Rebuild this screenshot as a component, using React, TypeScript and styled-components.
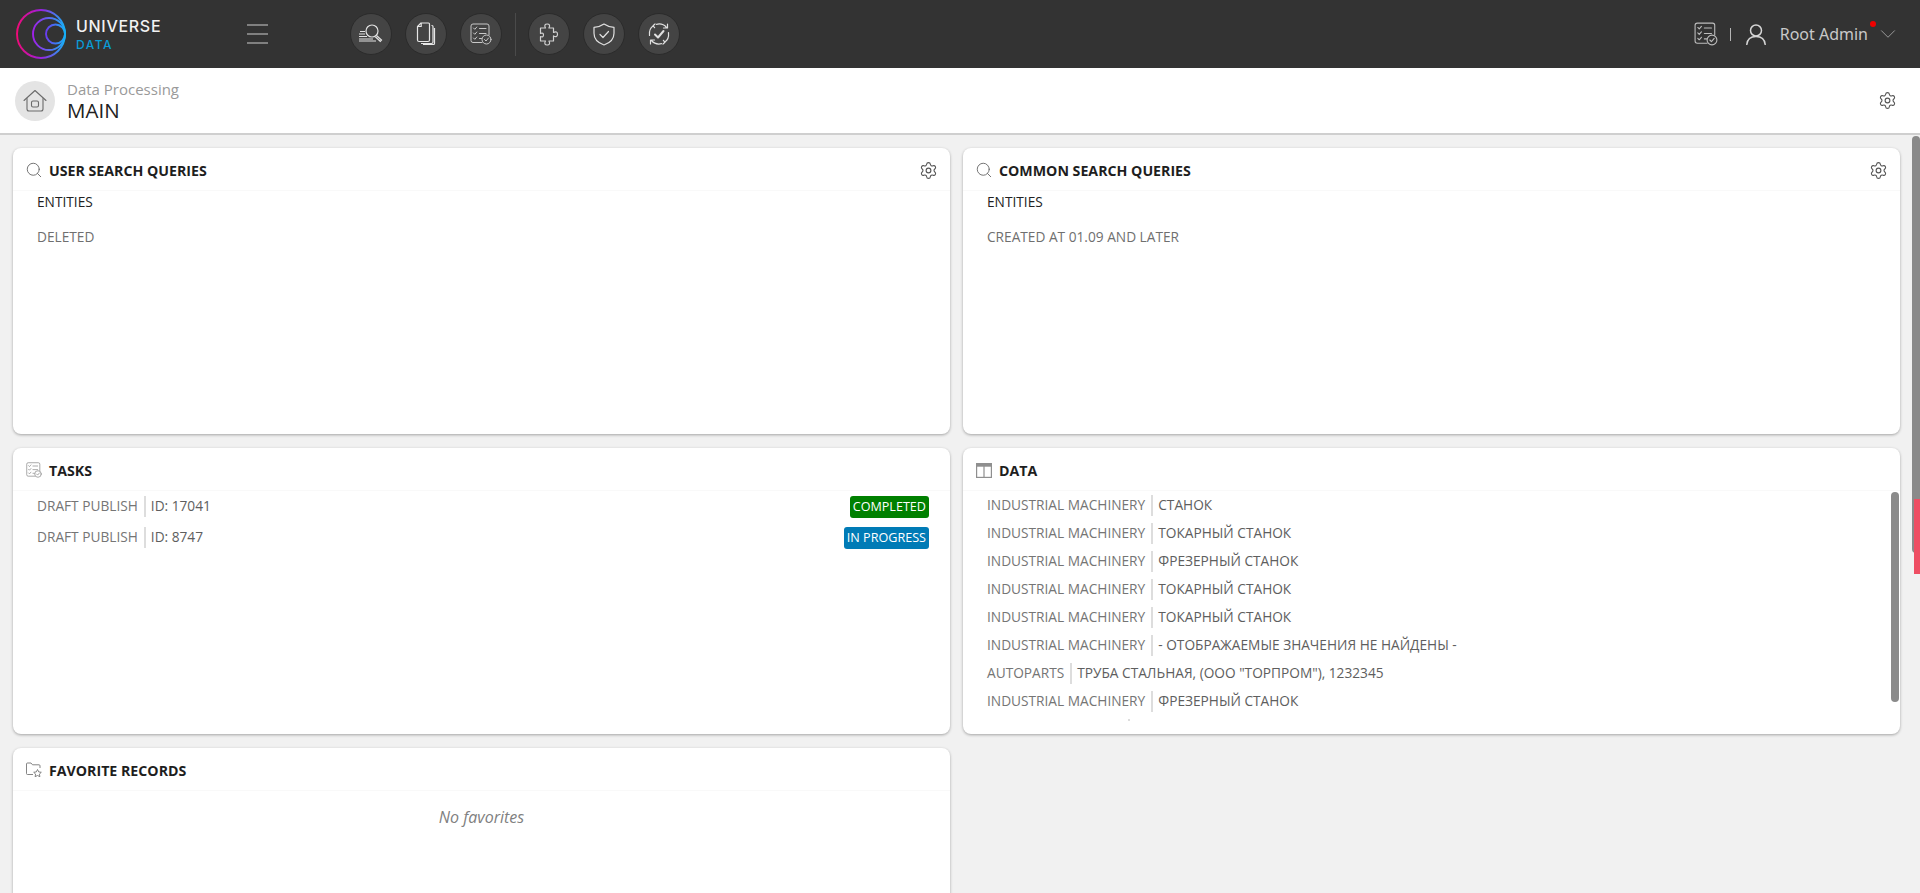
import styled, { createGlobalStyle } from "styled-components";
import { Search, Settings, ChevronDown } from "lucide-react";

const GlobalStyle = createGlobalStyle`
  html, body {
    margin: 0;
    height: 100%;
    overflow: hidden;
    background: #f1f1f1;
    font-family: "Open Sans", "Noto Sans", sans-serif;
  }
  * { box-sizing: border-box; }
`;

const Page = styled.div`
  height: 893px;
  display: flex;
  flex-direction: column;
  position: relative;
`;
const TopBar = styled.header`
  height: 68px;
  flex: none;
  background: #333333;
  display: flex;
  align-items: center;
  padding: 0 19px 0 16px;
`;
const Logo = styled.div`
  width: 244px;
  display: flex;
  align-items: center;
  gap: 10px;
  flex: none;
`;
const LogoText = styled.div`
  display: flex;
  flex-direction: column;
  line-height: 1;
`;
const LogoName = styled.span`
  color: #f2f2f2;
  font-family: Inter, sans-serif;
  font-size: 16px;
  font-weight: 500;
  letter-spacing: 0.7px;
  line-height: 19px;
`;
const LogoSub = styled.span`
  color: #0a9bd6;
  font-family: Inter, sans-serif;
  font-size: 12px;
  font-weight: 500;
  letter-spacing: 1.5px;
  line-height: 14px;
  margin-top: 2px;
`;
const Burger = styled.button`
  width: 21px;
  height: 20px;
  flex: none;
  padding: 0;
  border: 0;
  background: none;
  display: flex;
  flex-direction: column;
  justify-content: space-between;
  margin: 0 82px 0 -13px;
  & > i {
    display: block;
    height: 2px;
    background: #808080;
  }
`;
const RoundButton = styled.button`
  width: 42px;
  height: 42px;
  flex: none;
  padding: 0;
  border: 1px solid #2b2b2b;
  border-radius: 50%;
  background: #444444;
  display: flex;
  align-items: center;
  justify-content: center;
  margin-right: 13px;
`;
const BarDivider = styled.div`
  width: 1px;
  height: 43px;
  background: #4a4a4a;
  margin-right: 12px;
  flex: none;
`;
const UserArea = styled.div`
  margin-left: auto;
  display: flex;
  align-items: center;
  position: relative;
`;
const Pipe = styled.div`
  width: 1px;
  height: 13px;
  background: #b5b5b5;
  margin: 0 15px 0 12px;
`;
const UserName = styled.span`
  color: #c9c9c9;
  font-family: "Noto Sans", sans-serif;
  font-size: 16px;
  margin: 0 7px 0 14px;
  line-height: 22px;
`;
const RedDot = styled.span`
  position: absolute;
  width: 6px;
  height: 6px;
  border-radius: 50%;
  background: #f00000;
  right: 25px;
  top: 0;
`;
const SubBar = styled.div`
  height: 67px;
  flex: none;
  background: #ffffff;
  border-bottom: 2px solid #cfcfcf;
  display: flex;
  align-items: center;
  padding: 0 23px 0 15px;
`;
const HomeBadge = styled.div`
  width: 40px;
  height: 40px;
  border-radius: 50%;
  background: #e4e4e4;
  display: flex;
  align-items: center;
  justify-content: center;
  margin-right: 12px;
  flex: none;
`;
const Crumbs = styled.div`
  display: flex;
  flex-direction: column;
`;
const CrumbParent = styled.span`
  color: #9a9a9a;
  font-size: 15px;
  line-height: 19px;
`;
const CrumbCurrent = styled.span`
  color: #222222;
  font-size: 20.5px;
  line-height: 23px;
`;
const SubBarEnd = styled.div`
  margin-left: auto;
  display: flex;
`;
const Scroller = styled.main`
  flex: 1;
  overflow: hidden;
`;
const Grid = styled.div`
  display: grid;
  grid-template-columns: 937px 937px;
  grid-auto-rows: 286px;
  gap: 14px 13px;
  padding: 13px 12px 0 13px;
`;
const Card = styled.section`
  position: relative;
  background: #ffffff;
  border-radius: 8px;
  box-shadow: 0 1px 3px rgba(0, 0, 0, 0.32);
  display: flex;
  flex-direction: column;
  min-height: 0;
`;
const CardHead = styled.div`
  height: 43px;
  flex: none;
  display: flex;
  align-items: center;
  padding: 2px 12px 0 12px;
  border-bottom: 1px solid #f9f9f9;
`;
const IconSlot = styled.span`
  width: 18px;
  height: 18px;
  flex: none;
  display: flex;
  align-items: center;
  justify-content: center;
`;
const CardTitle = styled.h2`
  margin: 2px 0 0 6px;
  color: #1e1e1e;
  font-size: 14.2px;
  font-weight: 700;
  line-height: 20px;
`;
const HeadGear = styled.div`
  margin-left: auto;
  display: flex;
`;
const QueryBody = styled.div`
  padding: 1px 24px;
`;
const QueryGroup = styled.div`
  color: #222222;
  font-size: 13.7px;
  line-height: 20px;
  margin-bottom: 15px;
`;
const QueryItem = styled.div`
  color: #6f6f6f;
  font-size: 13.7px;
  line-height: 20px;
`;
const RowList = styled.div`
  padding: 5px 0 0 24px;
`;
const TaskRow = styled.div`
  height: 31px;
  display: flex;
  align-items: flex-start;
  padding-right: 21px;
`;
const Cell = styled.div<{ $first?: boolean }>`
  color: ${(p) => (p.$first ? "#757575" : "#5e5e5e")};
  font-size: 13.7px;
  line-height: 20px;
  padding-bottom: 1px;
  white-space: nowrap;
  ${(p) =>
    p.$first
      ? "padding-right: 6px; border-right: 2px solid #dddddd;"
      : "padding-left: 5px;"}
`;
const Badge = styled.span<{ $bg: string }>`
  margin-left: auto;
  height: 22px;
  padding: 0 3px;
  border-radius: 3px;
  color: #ffffff;
  background: ${(p) => p.$bg};
  font-size: 12.6px;
  line-height: 22px;
`;
const DataList = styled.div`
  height: 230px;
  overflow: hidden;
  padding: 4px 0 0 24px;
`;
const DataRow = styled.div`
  height: 28px;
  display: flex;
  align-items: flex-start;
`;
const ClippedDivider = styled.div`
  width: 2px;
  height: 21px;
  margin-left: 141px;
  background: #dddddd;
`;
const CardThumb = styled.div`
  position: absolute;
  right: 1px;
  top: 44px;
  width: 8px;
  height: 210px;
  border-radius: 4px;
  background: #8a8a8a;
`;
const Empty = styled.div`
  text-align: center;
  color: #808080;
  font-style: italic;
  font-size: 16px;
  line-height: 20px;
  margin-top: 16px;
`;
const PageThumb = styled.div`
  position: absolute;
  right: 0;
  top: 136px;
  width: 8px;
  height: 417px;
  border-radius: 4px;
  background: #8a8a8a;
`;
const PinnedTab = styled.div`
  position: absolute;
  right: 0;
  top: 499px;
  width: 6px;
  height: 75px;
  background: #ee4e63;
`;

const RingLogo = () => (
  <svg width="50" height="50" viewBox="0 0 50 50" fill="none">
    <defs>
      <linearGradient id="ring" x1="0" y1="0.5" x2="1" y2="0.5">
        <stop offset="0" stopColor="#f00a78" />
        <stop offset="0.5" stopColor="#9a20e0" />
        <stop offset="1" stopColor="#16b0f5" />
      </linearGradient>
      <linearGradient id="ringMid" gradientUnits="userSpaceOnUse" x1="17" y1="25" x2="49" y2="25">
        <stop offset="0" stopColor="#a020e8" />
        <stop offset="1" stopColor="#16b0f5" />
      </linearGradient>
      <linearGradient id="ringIn" gradientUnits="userSpaceOnUse" x1="30" y1="25" x2="49" y2="25">
        <stop offset="0" stopColor="#6a3cf0" />
        <stop offset="1" stopColor="#16b0f5" />
      </linearGradient>
    </defs>
    <circle cx="25" cy="25" r="24" stroke="url(#ring)" strokeWidth="1.9" />
    <circle cx="33" cy="25" r="16" stroke="url(#ringMid)" strokeWidth="1.9" />
    <circle cx="39.5" cy="25" r="9.5" stroke="url(#ringIn)" strokeWidth="1.9" />
  </svg>
);

const SearchLines = () => (
  <svg width="24" height="22" viewBox="0 0 24 22" fill="none" stroke="#e2e2e2" strokeWidth="1.2">
    <circle cx="13" cy="8" r="6" />
    <path d="M17.5 12.5l5 4.6-1.2 1.2-5-4.6" />
    <path d="M1 8.5h5M0 11h6M0 13.5h8M0 16h14M0 18h17" />
  </svg>
);
const FilesIcon = () => (
  <svg width="20" height="24" viewBox="0 0 20 24" fill="none" stroke="#e6e6e6" strokeWidth="1.2" strokeLinejoin="round">
    <path d="M5 1h7.5a1 1 0 0 1 1 1v16a1.5 1.5 0 0 1-1.5 1.5H3A1.5 1.5 0 0 1 1.500 18V4.500z" />
    <path d="M15.500 3.500h.5a1 1 0 0 1 1 1V20a1.500 1.500 0 0 1-1.500 1.500H5" />
    <path d="M18.500 6v15.500a1 1 0 0 1-1 1H7" />
    <path d="M5.200 1v3.500H1.500" />
  </svg>
);
const TasksIcon = ({ size = 22, color = "#c8c8c8" }: { size?: number; color?: string }) => (
  <svg width={size} height={size} viewBox="0 0 22 22" fill="none" stroke={color} strokeWidth="1" strokeLinecap="round" strokeLinejoin="round">
    <path d="M12 19.500H3a2 2 0 0 1-2-2V3a2 2 0 0 1 2-2h14a2 2 0 0 1 2 2v9" />
    <path d="M3.500 5l1.300 1.300 2-2.300M3.500 10l1.300 1.300 2-2.300M3.500 15l1.300 1.300 2-2.300" />
    <path d="M9.500 5.500h6.500M9.500 10.500h6.500M9.500 15.500h2" />
    <circle cx="16.500" cy="16.500" r="4.500" />
    <path d="M14.500 16.500l1.500 1.500 2.500-3" />
  </svg>
);
const PuzzleIcon = () => (
  <svg width="20" height="23" viewBox="0 0 20 23" fill="none" stroke="#d0d0d0" strokeWidth="1.2" strokeLinejoin="round">
    <path d="M1.500 5h5c-1.500-2.500-.5-4 1.700-4s3.200 1.500 1.700 4h4.600v4.500c2.500-1.500 4-.5 4 1.700s-1.500 3.200-4 1.700V18h-4.600c1.500 2.500.5 4-1.700 4s-3.200-1.500-1.700-4h-5v-4.500c2 1 3 0 3-1.500S3.500 9.500 1.500 10.500z" />
  </svg>
);
const ShieldIcon = () => (
  <svg width="22" height="23" viewBox="0 0 22 23" fill="none" stroke="#e0e0e0" strokeWidth="1.2" strokeLinejoin="round" strokeLinecap="round">
    <path d="M11 1c2.500 1.800 6 3 10 3.300v6C21 16 17 20 11 22 5 20 1 16 1 10.300v-6C5 4 8.500 2.800 11 1z" />
    <path d="M7 11.500l3 3 5.500-6" />
  </svg>
);
const SyncIcon = () => (
  <svg width="22" height="22" viewBox="0 0 22 22" fill="none" stroke="#e0e0e0" strokeWidth="1.2" strokeLinecap="round" strokeLinejoin="round">
    <path d="M1.500 12.500C1 8 2.500 4.500 5.500 2.800M7 1l-2 1.700 1.600 2" />
    <path d="M8.500 1.300C12 .5 16 1.500 18.500 4.500M19.500 1v4h-4" />
    <path d="M20.500 9.500c.5 4.500-1 8-4 9.700M15 21l2-1.700-1.600-2" />
    <path d="M13.500 20.700C10 21.500 6 20.500 3.500 17.500M2.500 21v-4h4" />
    <path d="M7 11.500l3 3 5.500-6.500" strokeWidth="2" />
  </svg>
);
const UserIcon = () => (
  <svg width="20" height="21" viewBox="0 0 20 21" fill="none" stroke="#d6d6d6" strokeWidth="1.5" strokeLinecap="round">
    <circle cx="10" cy="6.500" r="5.500" />
    <path d="M.800 20.500c.5-5 4-8 9.200-8s8.700 3 9.200 8" />
  </svg>
);
const HomeIcon = () => (
  <svg width="24" height="24" viewBox="0 0 24 24" fill="none" stroke="#6a6a6a" strokeWidth="1.1" strokeLinejoin="round" strokeLinecap="round">
    <path d="M1 11.500L12 1.500l11 10" />
    <path d="M4 9.500V20a2 2 0 0 0 2 2h12a2 2 0 0 0 2-2V9.500" />
    <rect x="8.500" y="12" width="7" height="6" rx="1.500" />
  </svg>
);
const FolderStarIcon = () => (
  <svg width="16" height="16" viewBox="0 0 16 16" fill="none" stroke="#777777" strokeWidth="0.9" strokeLinejoin="round">
    <path d="M7 12.500H1.500a1 1 0 0 1-1-1V2a1 1 0 0 1 1-1h3.500l1.500 1.800H13a1 1 0 0 1 1 1V6" />
    <path d="M11.500 7.500l1.200 2.400 2.600.4-1.900 1.800.5 2.600-2.400-1.200-2.400 1.200.5-2.600-1.900-1.800 2.600-.4z" />
  </svg>
);
const TableIcon = () => (
  <svg width="16" height="15" viewBox="0 0 16 15" fill="none" stroke="#8f8f8f" strokeWidth="1.2">
    <rect x="0.6" y="0.6" width="14.800" height="13.800" />
    <path d="M0 2.200h16" strokeWidth="3" />
    <path d="M8 1v13" />
  </svg>
);

const dataRows = [
  ["INDUSTRIAL MACHINERY", "СТАНОК"],
  ["INDUSTRIAL MACHINERY", "ТОКАРНЫЙ СТАНОК"],
  ["INDUSTRIAL MACHINERY", "ФРЕЗЕРНЫЙ СТАНОК"],
  ["INDUSTRIAL MACHINERY", "ТОКАРНЫЙ СТАНОК"],
  ["INDUSTRIAL MACHINERY", "ТОКАРНЫЙ СТАНОК"],
  ["INDUSTRIAL MACHINERY", "- ОТОБРАЖАЕМЫЕ ЗНАЧЕНИЯ НЕ НАЙДЕНЫ -"],
  ["AUTOPARTS", 'ТРУБА СТАЛЬНАЯ, (ООО "ТОРПРОМ"), 1232345'],
  ["INDUSTRIAL MACHINERY", "ФРЕЗЕРНЫЙ СТАНОК"],
];

export default function App() {
  return (
    <Page>
      <GlobalStyle />
      <TopBar>
        <Logo>
          <RingLogo />
          <LogoText>
            <LogoName>UNIVERSE</LogoName>
            <LogoSub>DATA</LogoSub>
          </LogoText>
        </Logo>
        <Burger>
          <i />
          <i />
          <i />
        </Burger>
        <RoundButton><SearchLines /></RoundButton>
        <RoundButton><FilesIcon /></RoundButton>
        <RoundButton><TasksIcon /></RoundButton>
        <BarDivider />
        <RoundButton><PuzzleIcon /></RoundButton>
        <RoundButton><ShieldIcon /></RoundButton>
        <RoundButton><SyncIcon /></RoundButton>
        <UserArea>
          <TasksIcon size={24} color="#bdbdbd" />
          <Pipe />
          <UserIcon />
          <UserName>Root Admin</UserName>
          <RedDot />
          <ChevronDown size={26} strokeWidth={0.9} color="#9a9a9a" />
        </UserArea>
      </TopBar>
      <SubBar>
        <HomeBadge><HomeIcon /></HomeBadge>
        <Crumbs>
          <CrumbParent>Data Processing</CrumbParent>
          <CrumbCurrent>MAIN</CrumbCurrent>
        </Crumbs>
        <SubBarEnd><Settings size={19} strokeWidth={1.4} color="#555555" /></SubBarEnd>
      </SubBar>
      <Scroller>
        <Grid>
          <Card>
            <CardHead>
              <IconSlot><Search size={18} strokeWidth={1.2} color="#666666" /></IconSlot>
              <CardTitle>USER SEARCH QUERIES</CardTitle>
              <HeadGear><Settings size={19} strokeWidth={1.4} color="#555555" /></HeadGear>
            </CardHead>
            <QueryBody>
              <QueryGroup>ENTITIES</QueryGroup>
              <QueryItem>DELETED</QueryItem>
            </QueryBody>
          </Card>
          <Card>
            <CardHead>
              <IconSlot><Search size={18} strokeWidth={1.2} color="#666666" /></IconSlot>
              <CardTitle>COMMON SEARCH QUERIES</CardTitle>
              <HeadGear><Settings size={19} strokeWidth={1.4} color="#555555" /></HeadGear>
            </CardHead>
            <QueryBody>
              <QueryGroup>ENTITIES</QueryGroup>
              <QueryItem>CREATED AT 01.09 AND LATER</QueryItem>
            </QueryBody>
          </Card>
          <Card>
            <CardHead>
              <IconSlot><TasksIcon size={16} color="#8a8a8a" /></IconSlot>
              <CardTitle>TASKS</CardTitle>
            </CardHead>
            <RowList>
              <TaskRow>
                <Cell $first>DRAFT PUBLISH</Cell>
                <Cell>ID: 17041</Cell>
                <Badge $bg="#008000">COMPLETED</Badge>
              </TaskRow>
              <TaskRow>
                <Cell $first>DRAFT PUBLISH</Cell>
                <Cell>ID: 8747</Cell>
                <Badge $bg="#007bb6">IN PROGRESS</Badge>
              </TaskRow>
            </RowList>
          </Card>
          <Card>
            <CardHead>
              <IconSlot><TableIcon /></IconSlot>
              <CardTitle>DATA</CardTitle>
            </CardHead>
            <DataList>
              {dataRows.map((row, i) => (
                <DataRow key={i}>
                  <Cell $first>{row[0]}</Cell>
                  <Cell>{row[1]}</Cell>
                </DataRow>
              ))}
              <DataRow><ClippedDivider /></DataRow>
            </DataList>
            <CardThumb />
          </Card>
          <Card>
            <CardHead>
              <IconSlot><FolderStarIcon /></IconSlot>
              <CardTitle>FAVORITE RECORDS</CardTitle>
            </CardHead>
            <Empty>No favorites</Empty>
          </Card>
        </Grid>
      </Scroller>
      <PageThumb />
      <PinnedTab />
    </Page>
  );
}
